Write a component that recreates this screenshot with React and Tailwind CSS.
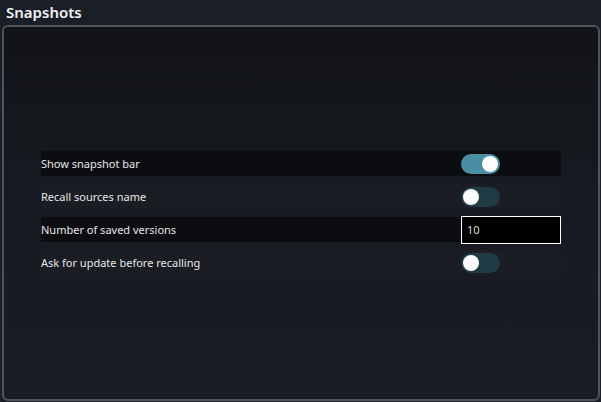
export default function App() {
  const rows = [
    { label: 'Show snapshot bar', type: 'toggle', on: true },
    { label: 'Recall sources name', type: 'toggle', on: false },
    { label: 'Number of saved versions', type: 'input', value: '10' },
    { label: 'Ask for update before recalling', type: 'toggle', on: false },
  ];

  return (
    <div className="w-[601px] h-[402px] bg-[#1a1e26] flex flex-col font-['Noto_Sans','Open_Sans',sans-serif] text-[#e6e6e6] overflow-hidden">
      <h1 className="h-[25px] px-[6px] pt-[1px] text-[15px] font-semibold leading-[22px] text-[#f0f0f0]">Snapshots</h1>
      <div className="flex-1 ml-[2px] mr-[1px] mb-[1px] border-2 border-[#505358] rounded-[6px] bg-gradient-to-b from-[#121418] via-[#171a20] to-[#1a1d25] pt-[124px] px-[37px] flex flex-col gap-[8px]">
        {rows.map((r, i) => (
          <div
            key={r.label}
            className={`h-[25px] flex items-center ${i % 2 === 0 ? 'bg-[#0c0d10]' : 'bg-[#1a1d24]'}`}
          >
            <span className="flex-1 text-[11px] leading-none">{r.label}</span>
            <div className="w-[100px] flex items-center">
              {r.type === 'toggle' ? (
                <div
                  className={`w-[39px] h-[20px] rounded-full flex items-center px-[2px] ${
                    r.on ? 'bg-[#4a8ea4] justify-end' : 'bg-[#1f3c46] justify-start'
                  }`}
                >
                  <div className="w-[16px] h-[16px] rounded-full bg-white" />
                </div>
              ) : (
                <input
                  readOnly
                  value={r.value}
                  className="w-[100px] h-[28px] bg-black border border-white px-[5px] text-[11px] text-[#dcdcdc] outline-none"
                />
              )}
            </div>
          </div>
        ))}
      </div>
    </div>
  );
}
